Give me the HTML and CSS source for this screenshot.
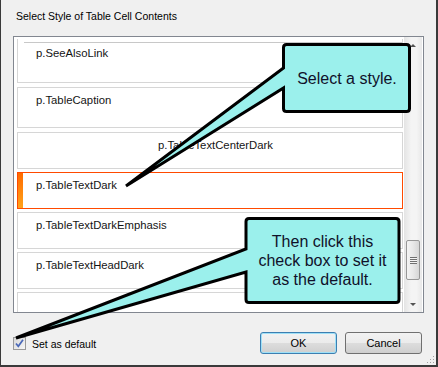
FILE: index.html
```
<!DOCTYPE html>
<html lang="en">
<head>
    <meta charset="UTF-8">
    <title>Select Style of Table Cell Contents</title>
    <link rel="stylesheet" href="styles.css">
</head>
<body>
    <div class="dialog">
        <div class="dialog-title">Select Style of Table Cell Contents</div>

        <div class="style-list">
            <div class="style-items">
                <div class="style-item item-cut"><span class="cut-rule"></span>p.SeeAlsoLink</div>
                <div class="style-item item-tall">p.TableCaption</div>
                <div class="style-item item-center">p.TableTextCenterDark</div>
                <div class="style-item selected">p.TableTextDark</div>
                <div class="style-item">p.TableTextDarkEmphasis</div>
                <div class="style-item">p.TableTextHeadDark</div>
                <div class="style-item"></div>
            </div>
            <div class="scrollbar">
                <span class="scroll-arrow arrow-up"></span>
                <span class="scroll-track">
                    <span class="scroll-thumb"><span class="grip-lines"></span></span>
                </span>
                <span class="scroll-arrow arrow-down"></span>
            </div>
        </div>

        <div class="dialog-footer">
            <label class="default-check">
                <span class="checkbox">
                    <svg width="11" height="11" viewBox="0 0 11 11">
                        <path d="M2 5.5 L4.3 8.3 L9 1.8" fill="none" stroke="#4a68b8" stroke-width="1.7"/>
                    </svg>
                </span>
                Set as default
            </label>
            <div class="buttons">
                <button class="btn btn-default">OK</button>
                <button class="btn">Cancel</button>
            </div>
        </div>

        <svg class="resize-grip" width="8" height="8" viewBox="0 0 8 8">
            <rect x="6" y="0" width="1" height="1" fill="#a0a0a0"/>
            <rect x="3" y="3" width="1" height="1" fill="#a0a0a0"/>
            <rect x="6" y="3" width="1" height="1" fill="#a0a0a0"/>
            <rect x="0" y="6" width="1" height="1" fill="#a0a0a0"/>
            <rect x="3" y="6" width="1" height="1" fill="#a0a0a0"/>
            <rect x="6" y="6" width="1" height="1" fill="#a0a0a0"/>
        </svg>

        <!-- callout shapes drawn over the dialog -->
        <svg class="callouts" width="438" height="367" viewBox="0 0 438 367">
            <path d="M286.5 44.5 H406.5 Q409.5 44.5 409.5 47.5 V108.5 Q409.5 111.5 406.5 111.5 H286.5 Q283.5 111.5 283.5 108.5 V88 L126 186 L283.5 68 V47.5 Q283.5 44.5 286.5 44.5 Z"
                  fill="#9bf0ec" stroke="#000" stroke-width="3"/>
            <path d="M249 218.5 H396 Q399 218.5 399 221.5 V299.5 Q399 302.5 396 302.5 H249 Q246 302.5 246 299.5 V272 L16 338 L246 249 V221.5 Q246 218.5 249 218.5 Z"
                  fill="#9bf0ec" stroke="#000" stroke-width="3"/>
        </svg>
        <div class="callout-text callout-one">Select a style.</div>
        <div class="callout-text callout-two">Then click this<br>check box to set it<br>as the default.</div>
    </div>
</body>
</html>
```

FILE: styles.css
```
* {
    margin: 0;
    padding: 0;
    box-sizing: border-box;
}

body {
    background-color: #f0f0f0;
    font-family: "Liberation Sans", Arial, sans-serif;
    font-size: 11px;
    color: #111;
}

.dialog {
    position: relative;
    width: 438px;
    height: 367px;
    background-color: #f0f0f0;
    border-left: 1px solid #3a3a3a;
    border-right: 2px solid #3a3a3a;
    border-bottom: 2px solid #3a3a3a;
    padding: 0 12px 0 12px;
}

.dialog-title {
    padding: 10px 0 0 3px;
    font-size: 10.5px;
    line-height: 13px;
    color: #000;
}

.style-list {
    display: flex;
    width: 411px;
    height: 277px;
    margin-top: 13px;
    background-color: #fff;
    border: 1px solid #828790;
}

.style-items {
    width: 390px;
    padding: 2px 1px 0 3px;
    overflow: hidden;
}

.style-item {
    height: 37px;
    margin-bottom: 3px;
    padding: 5px 0 0 18px;
    border: 1px solid #d6d6d6;
    background-color: #fff;
    font-size: 11.3px;
    line-height: 14px;
    color: #141414;
    white-space: nowrap;
}

.item-cut {
    height: 44px;
    margin-bottom: 4px;
    padding-top: 3px;
    border-top: none;
}

.cut-rule {
    display: block;
    margin: 0 0 3px -12px;
    border-top: 1px solid #c8c8c8;
}

.item-tall {
    height: 41px;
    margin-bottom: 4px;
}

.item-center {
    text-align: center;
    padding-right: 7px;
}

.style-item.selected {
    border-color: #ff4a00;
    background: linear-gradient(#ff6a00, #ffa31a) left / 5px 100% no-repeat, #fff;
}

.scrollbar {
    display: flex;
    flex-direction: column;
    width: 18px;
    margin-right: 1px;
    background: linear-gradient(to right, #e4e4e4, #f4f4f4 40%, #f4f4f4 70%, #e8e8e8);
}

.scroll-arrow {
    position: relative;
    height: 17px;
}

.scroll-arrow::after {
    content: "";
    position: absolute;
    left: 6px;
    border-left: 3px solid transparent;
    border-right: 3px solid transparent;
}

.arrow-up::after {
    top: 7px;
    border-bottom: 3px solid #555;
}

.arrow-down::after {
    top: 8px;
    border-top: 3px solid #555;
}

.scroll-track {
    flex: 1;
}

.scroll-thumb {
    display: flex;
    align-items: center;
    justify-content: center;
    width: 14px;
    height: 40px;
    margin: 186px 0 0 2px;
    border: 1px solid #979797;
    border-radius: 2px;
    background: linear-gradient(to right, #f4f4f4, #e8e8e8 50%, #d6d6d6);
}

.grip-lines {
    width: 7px;
    height: 7px;
    background: repeating-linear-gradient(#707070 0, #707070 1px, #f4f4f4 1px, #f4f4f4 2px);
}

.dialog-footer {
    display: flex;
    align-items: center;
    justify-content: space-between;
    height: 22px;
    margin-top: 19px;
    padding-right: 2px;
}

.default-check {
    display: flex;
    align-items: center;
    gap: 6px;
    padding-top: 1px;
    font-size: 10.5px;
    color: #000;
}

.checkbox {
    display: flex;
    align-items: center;
    justify-content: center;
    width: 13px;
    height: 13px;
    border: 1px solid #9a9a9a;
    background: linear-gradient(135deg, #d8d8d8, #f6f6f6);
}

.buttons {
    display: flex;
    gap: 8px;
}

.btn {
    width: 77px;
    height: 22px;
    border: 1px solid #707070;
    border-radius: 3px;
    background: linear-gradient(#f2f2f2 0%, #ebebeb 50%, #dddddd 50%, #cfcfcf 100%);
    font-family: "Liberation Sans", Arial, sans-serif;
    font-size: 11px;
    color: #000;
}

.btn-default {
    border-color: #3c7fb1;
    box-shadow: inset 0 0 0 1px #9fe0f7;
}

.resize-grip {
    position: absolute;
    right: 1px;
    bottom: 1px;
}

.callouts {
    position: absolute;
    left: -1px;
    top: 0;
}

.callout-text {
    position: absolute;
    display: flex;
    align-items: center;
    justify-content: center;
    text-align: center;
    font-size: 16px;
    line-height: 19px;
    color: #10102a;
}

.callout-one {
    left: 282px;
    top: 43px;
    width: 128px;
    height: 70px;
}

.callout-two {
    left: 244px;
    top: 217px;
    width: 155px;
    height: 87px;
}
```
